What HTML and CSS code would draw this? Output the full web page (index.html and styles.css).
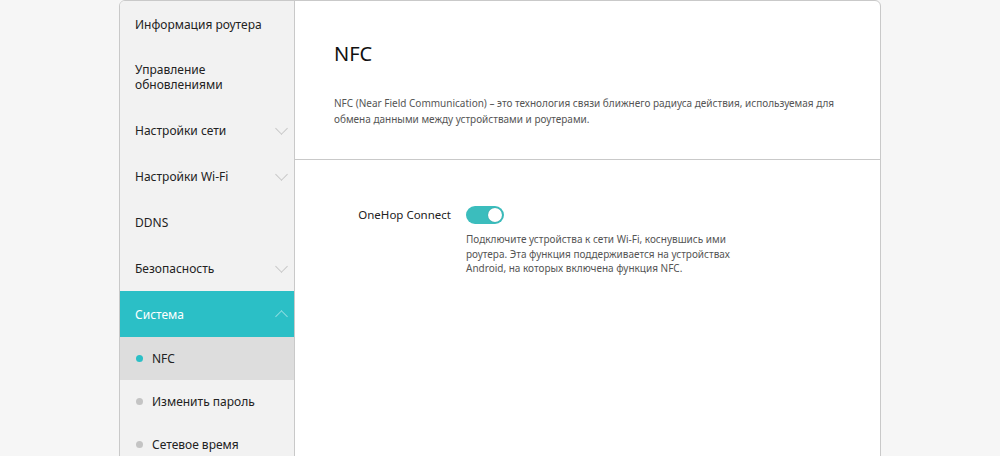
FILE: index.html
```html
<!DOCTYPE html>
<html lang="ru">
<head>
    <meta charset="UTF-8">
    <meta name="viewport" content="width=device-width, initial-scale=1.0">
    <title>NFC</title>
    <link rel="stylesheet" href="styles.css">
</head>
<body>
    <div class="page">
        <nav class="sidebar">
            <div class="menu-item">Информация роутера</div>
            <div class="menu-item tall">Управление<br>обновлениями</div>
            <div class="menu-item">Настройки сети<span class="chevron"></span></div>
            <div class="menu-item">Настройки Wi-Fi<span class="chevron"></span></div>
            <div class="menu-item">DDNS</div>
            <div class="menu-item">Безопасность<span class="chevron"></span></div>
            <div class="menu-item active">Система<span class="chevron up"></span></div>
            <div class="sub-item current"><span class="dot"></span>NFC</div>
            <div class="sub-item"><span class="dot"></span>Изменить пароль</div>
            <div class="sub-item"><span class="dot"></span>Сетевое время</div>
        </nav>

        <main class="content">
            <div class="content-head">
                <h1>NFC</h1>
                <p class="intro">NFC (Near Field Communication) – это технология связи ближнего радиуса действия, используемая для обмена данными между устройствами и роутерами.</p>
            </div>

            <div class="setting">
                <div class="setting-label">OneHop Connect</div>
                <div class="setting-body">
                    <label class="switch">
                        <input type="checkbox" checked>
                        <span class="slider"></span>
                    </label>
                    <p class="hint">Подключите устройства к сети Wi-Fi, коснувшись ими роутера. Эта функция поддерживается на устройствах Android, на которых включена функция NFC.</p>
                </div>
            </div>
        </main>
    </div>
</body>
</html>
```

FILE: styles.css
```css
body {
    font-family: "Noto Sans", "Open Sans", sans-serif;
    background-color: #f6f6f6;
    margin: 0;
    color: #222;
}

.page {
    width: 760px;
    height: 470px;
    margin: 0 auto;
    display: flex;
    background-color: #fff;
    border: 1px solid #c9c9c9;
    border-radius: 6px 6px 0 0;
    overflow: hidden;
}

/* left menu */
.sidebar {
    width: 174px;
    flex-shrink: 0;
    background-color: #f2f2f2;
    border-right: 1px solid #c9c9c9;
}

.menu-item {
    position: relative;
    height: 46px;
    display: flex;
    align-items: center;
    padding: 0 16px 0 15px;
    font-size: 12px;
    line-height: 15px;
    color: #222;
}

.menu-item.tall {
    height: 60px;
}

.menu-item.active {
    background-color: #2bbfc6;
    color: #fff;
}

.chevron {
    position: absolute;
    right: 8px;
    top: 17px;
    width: 8px;
    height: 8px;
    border-right: 1px solid #c8c8c8;
    border-bottom: 1px solid #c8c8c8;
    transform: rotate(45deg);
}

.chevron.up {
    top: 21px;
    transform: rotate(-135deg);
    border-color: #8fdde1;
}

.sub-item {
    height: 43px;
    display: flex;
    align-items: center;
    padding-left: 16px;
    font-size: 12px;
    color: #222;
}

.sub-item.current {
    background-color: #dddddd;
}

.dot {
    width: 7px;
    height: 7px;
    border-radius: 50%;
    background-color: #c4c4c4;
    margin-right: 9px;
}

.sub-item.current .dot {
    background-color: #2bbfc6;
}

/* main panel */
.content {
    flex: 1;
}

.content-head {
    padding: 41px 40px 32px 39px;
    border-bottom: 1px solid #c9c9c9;
}

h1 {
    margin: 0 0 29px;
    font-size: 20px;
    line-height: 24px;
    font-weight: normal;
    color: #111;
}

.intro {
    margin: 0;
    font-size: 10px;
    line-height: 16px;
    color: #555;
    max-width: 505px;
}

.setting {
    display: flex;
    gap: 15px;
    padding-top: 46px;
}

.setting-label {
    width: 156px;
    text-align: right;
    font-size: 11.5px;
    line-height: 18px;
    color: #222;
}

.switch {
    position: relative;
    display: block;
    width: 38px;
    height: 18px;
}

.switch input {
    display: none;
}

.slider {
    position: absolute;
    inset: 0;
    border-radius: 9px;
    background-color: #3bbdbd;
}

.slider::after {
    content: "";
    position: absolute;
    right: 2px;
    top: 2px;
    width: 14px;
    height: 14px;
    border-radius: 50%;
    background-color: #fff;
    box-shadow: 0 0 1px rgba(0, 0, 0, 0.3);
}

.hint {
    margin: 8px 0 0;
    width: 290px;
    font-size: 10px;
    line-height: 14.5px;
    color: #555;
}
```
